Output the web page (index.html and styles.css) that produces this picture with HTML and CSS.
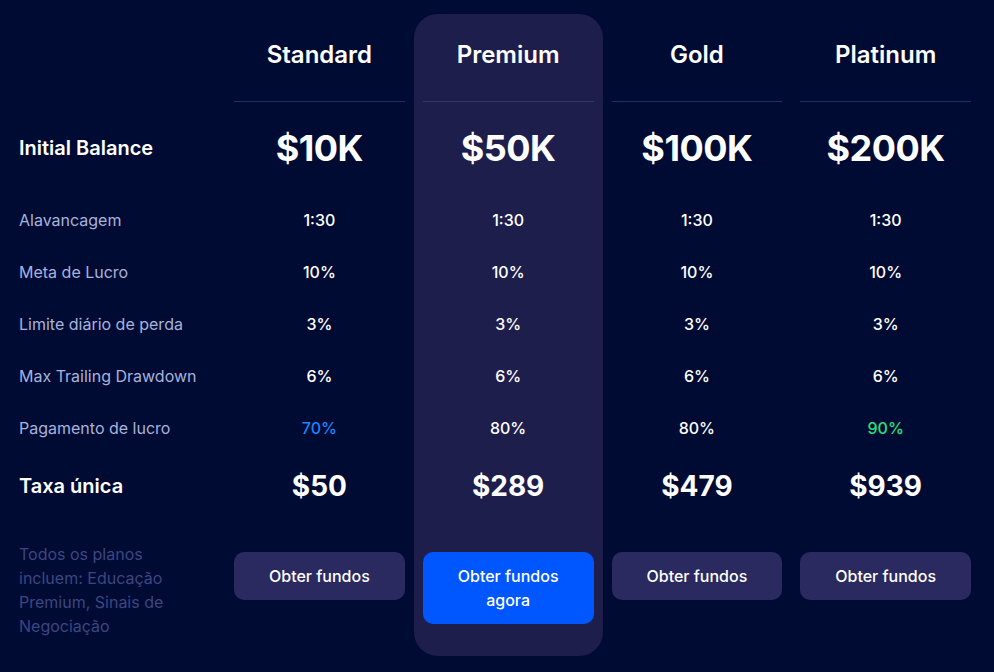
FILE: index.html
```html
<!DOCTYPE html>
<html lang="pt">
<head>
<meta charset="utf-8">
<title>Planos</title>
<link rel="stylesheet" href="styles.css">
</head>
<body>
<main class="table">
  <div class="col labels">
    <div class="cell head"></div>
    <div class="rule-space"></div>
    <div class="cell balance"><span class="label-strong">Initial Balance</span></div>
    <div class="cell row"><span class="label">Alavancagem</span></div>
    <div class="cell row"><span class="label">Meta de Lucro</span></div>
    <div class="cell row"><span class="label">Limite diário de perda</span></div>
    <div class="cell row"><span class="label">Max Trailing Drawdown</span></div>
    <div class="cell row"><span class="label">Pagamento de lucro</span></div>
    <div class="cell fee"><span class="label-strong">Taxa única</span></div>
    <div class="cell action"><p class="note">Todos os planos incluem: Educação Premium, Sinais de Negociação</p></div>
  </div>

  <div class="col plan">
    <div class="cell head"><h2 class="plan-name">Standard</h2></div>
    <div class="rule"></div>
    <div class="cell balance"><span class="amount">$10K</span></div>
    <div class="cell row"><span class="value">1:30</span></div>
    <div class="cell row"><span class="value">10%</span></div>
    <div class="cell row"><span class="value">3%</span></div>
    <div class="cell row"><span class="value">6%</span></div>
    <div class="cell row"><span class="value blue">70%</span></div>
    <div class="cell fee"><span class="price">$50</span></div>
    <div class="cell action"><button class="btn">Obter fundos</button></div>
  </div>

  <div class="col plan featured">
    <div class="cell head"><h2 class="plan-name">Premium</h2></div>
    <div class="rule"></div>
    <div class="cell balance"><span class="amount">$50K</span></div>
    <div class="cell row"><span class="value">1:30</span></div>
    <div class="cell row"><span class="value">10%</span></div>
    <div class="cell row"><span class="value">3%</span></div>
    <div class="cell row"><span class="value">6%</span></div>
    <div class="cell row"><span class="value">80%</span></div>
    <div class="cell fee"><span class="price">$289</span></div>
    <div class="cell action"><button class="btn btn-primary">Obter fundos agora</button></div>
  </div>

  <div class="col plan">
    <div class="cell head"><h2 class="plan-name">Gold</h2></div>
    <div class="rule"></div>
    <div class="cell balance"><span class="amount">$100K</span></div>
    <div class="cell row"><span class="value">1:30</span></div>
    <div class="cell row"><span class="value">10%</span></div>
    <div class="cell row"><span class="value">3%</span></div>
    <div class="cell row"><span class="value">6%</span></div>
    <div class="cell row"><span class="value">80%</span></div>
    <div class="cell fee"><span class="price">$479</span></div>
    <div class="cell action"><button class="btn">Obter fundos</button></div>
  </div>

  <div class="col plan">
    <div class="cell head"><h2 class="plan-name">Platinum</h2></div>
    <div class="rule"></div>
    <div class="cell balance"><span class="amount">$200K</span></div>
    <div class="cell row"><span class="value">1:30</span></div>
    <div class="cell row"><span class="value">10%</span></div>
    <div class="cell row"><span class="value">3%</span></div>
    <div class="cell row"><span class="value">6%</span></div>
    <div class="cell row"><span class="value green">90%</span></div>
    <div class="cell fee"><span class="price">$939</span></div>
    <div class="cell action"><button class="btn">Obter fundos</button></div>
  </div>
</main>
</body>
</html>
```

FILE: styles.css
```css
* { box-sizing: border-box; }

html, body {
  margin: 0;
  padding: 0;
  background: #000b34;
  height: 100%;
}

body {
  font-family: Inter, "Liberation Sans", Arial, sans-serif;
  color: #ffffff;
  -webkit-font-smoothing: antialiased;
}

.table {
  display: grid;
  grid-template-columns: 225px repeat(4, 1fr);
  width: 980px;
  padding-top: 14px;
}

.col {
  display: flex;
  flex-direction: column;
}

.plan {
  padding: 0 9px 32px;
  text-align: center;
}

.featured {
  background: #1e1e4c;
  border-radius: 24px;
}

.labels {
  padding-left: 19px;
}

.cell {
  display: flex;
  align-items: center;
}

.plan .cell {
  justify-content: center;
}

.head {
  height: 87px;
  align-items: flex-start;
  padding-top: 27px;
}

.plan-name {
  margin: 0;
  font-size: 24px;
  line-height: 28px;
  font-weight: 600;
}

.rule {
  height: 1px;
  background: #2a2d5c;
}

.featured .rule {
  background: #34376a;
}

.rule-space {
  height: 1px;
}

.balance {
  height: 92px;
}

.row {
  height: 52px;
}

.fee {
  height: 64px;
}

.action {
  padding-top: 24px;
  align-items: flex-start;
}

.plan .action {
  padding-top: 34px;
}

.label-strong {
  font-size: 20px;
  font-weight: 600;
  color: #ffffff;
}

.label {
  font-size: 16px;
  color: #a8b2db;
}

.amount {
  font-size: 36px;
  font-weight: 700;
  letter-spacing: -0.5px;
}

.value {
  font-size: 16px;
  font-weight: 500;
  color: #ffffff;
}

.value.blue { color: #1a86ff; }
.value.green { color: #2be07a; }

.price {
  font-size: 28px;
  font-weight: 700;
}

.note {
  margin: 0;
  width: 165px;
  font-size: 16px;
  line-height: 24px;
  color: #3d4680;
}

.btn {
  width: 100%;
  border: 0;
  border-radius: 10px;
  background: #2a2a61;
  color: #ffffff;
  font-family: inherit;
  font-size: 16px;
  font-weight: 500;
  line-height: 24px;
  padding: 12px 24px;
  cursor: pointer;
}

.btn-primary {
  background: #0057ff;
}
```
